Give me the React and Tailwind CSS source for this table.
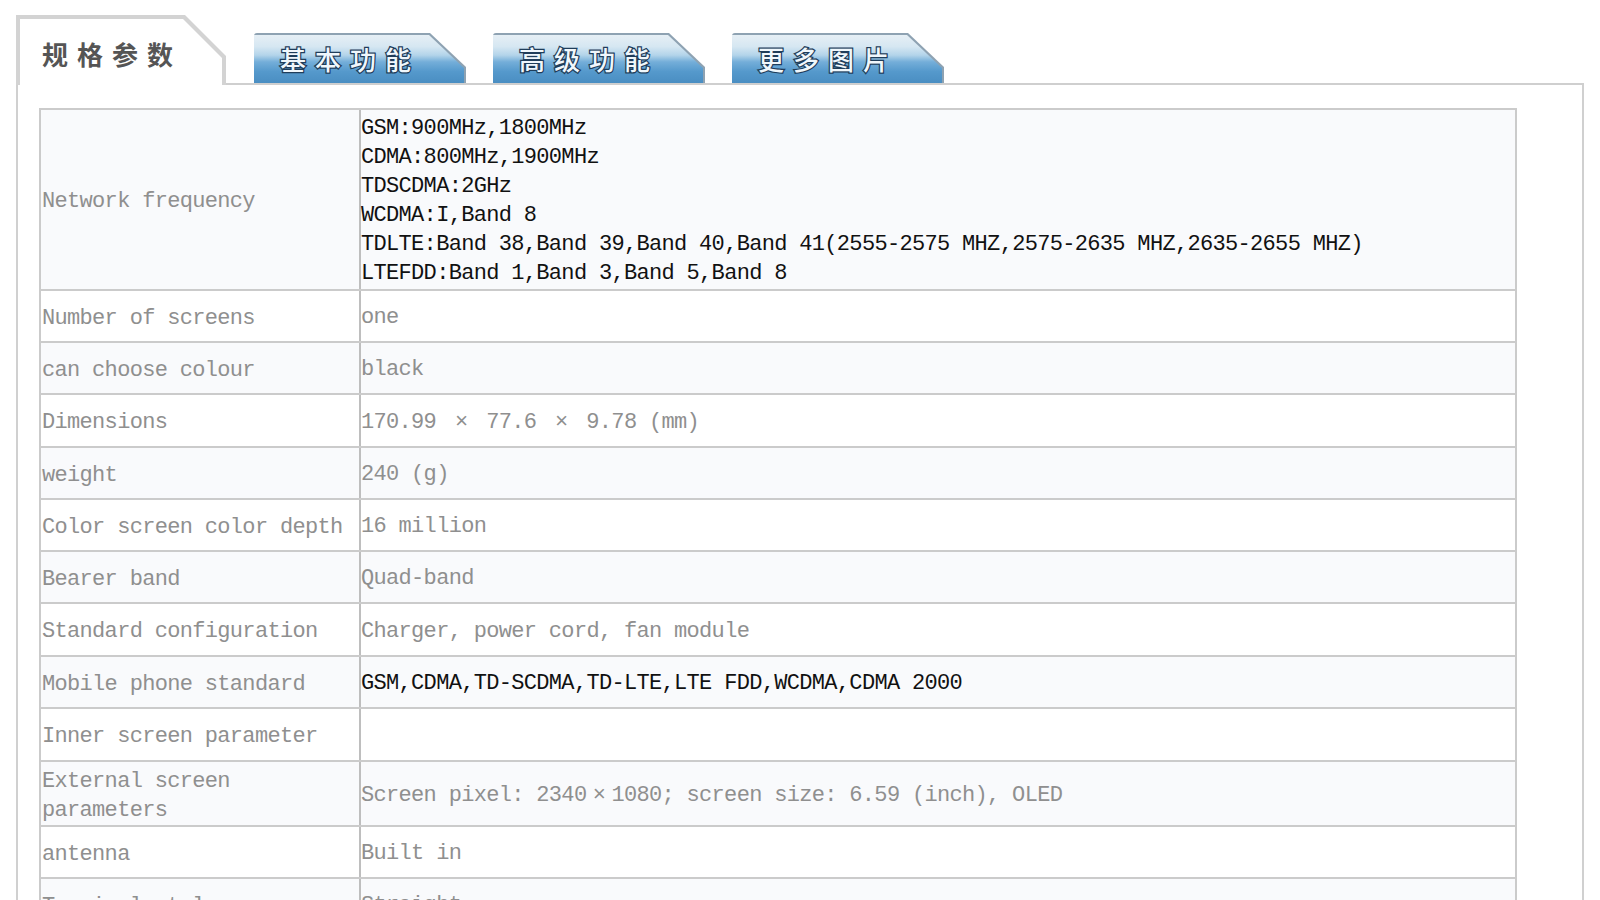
import React from 'react';

const rows = [
  {
    label: 'Network frequency',
    h: 'h-[181px]',
    dark: true,
    value: [
      'GSM:900MHz,1800MHz',
      'CDMA:800MHz,1900MHz',
      'TDSCDMA:2GHz',
      'WCDMA:I,Band 8',
      'TDLTE:Band 38,Band 39,Band 40,Band 41(2555-2575 MHZ,2575-2635 MHZ,2635-2655 MHZ)',
      'LTEFDD:Band 1,Band 3,Band 5,Band 8',
    ],
  },
  { label: 'Number of screens', h: 'h-[52px]', value: ['one'] },
  { label: 'can choose colour', h: 'h-[52px]', value: ['black'] },
  { label: 'Dimensions', h: 'h-[53px]', value: ['dims'] },
  { label: 'weight', h: 'h-[52px]', value: ['240 (g)'] },
  { label: 'Color screen color depth', h: 'h-[52px]', value: ['16 million'] },
  { label: 'Bearer band', h: 'h-[52px]', value: ['Quad-band'] },
  { label: 'Standard configuration', h: 'h-[53px]', value: ['Charger, power cord, fan module'] },
  {
    label: 'Mobile phone standard',
    h: 'h-[52px]',
    dark: true,
    value: ['GSM,CDMA,TD-SCDMA,TD-LTE,LTE FDD,WCDMA,CDMA 2000'],
  },
  { label: 'Inner screen parameter', h: 'h-[53px]', value: [''] },
  { label: 'External screen parameters', h: 'h-[65px]', value: ['screen'] },
  { label: 'antenna', h: 'h-[52px]', value: ['Built in'] },
  { label: 'Terminal style', h: 'h-[52px]', value: ['Straight'] },
];

const Times = () => <span className="inline-block w-[25px] text-center">×</span>;

const renderLine = (line) => {
  if (line === 'dims') {
    return (
      <>
        170.99 <Times /> 77.6 <Times /> 9.78 (mm)
      </>
    );
  }
  if (line === 'screen') {
    return (
      <>
        Screen pixel: 2340<Times />1080; screen size: 6.59 (inch), OLED
      </>
    );
  }
  return line;
};

const BlueTab = ({ label }) => (
  <div className="w-[212px] h-[50px] bg-[#8ea2b2] pt-[2px] rounded-tl-[3px] [clip-path:polygon(0_0,176px_0,100%_34px,100%_100%,0_100%)]">
    <div className="h-full flex items-center pl-[26px] bg-[linear-gradient(180deg,#e6eff5_0%,#d6e7f2_24%,#b3d4ea_42%,#74aed9_56%,#5599cc_76%,#4a8ec2_100%)] [clip-path:polygon(0_0,175px_0,210px_33px,210px_100%,0_100%)]">
      <span className="font-['Noto_Sans_CJK_SC',sans-serif] text-[26px] leading-none font-medium tracking-[9px] text-[#f0f7fc] [-webkit-text-stroke:2.5px_#1f3d5a] [paint-order:stroke_fill]">
        {label}
      </span>
    </div>
  </div>
);

const App = () => {
  return (
    <div className="w-[1600px] h-[900px] overflow-hidden bg-white">
      <div className="ml-[16px] w-[1568px] pt-[15px]">
        <div className="flex h-[70px]">
          <div className="w-[210px] h-[70px] shrink-0 bg-[#d3d3d3] pt-[4px] px-[4px] [clip-path:polygon(0_0,169px_0,100%_41px,100%_100%,0_100%)]">
            <div className="h-full bg-white flex items-center pl-[22px] pt-[4px] [clip-path:polygon(0_0,163px_0,100%_39px,100%_100%,0_100%)]">
              <span className="font-['Noto_Sans_CJK_SC',sans-serif] text-[26px] leading-none font-bold tracking-[9px] text-[#555555]">
                规格参数
              </span>
            </div>
          </div>
          <div className="flex-1 flex items-end gap-[27px] pl-[28px] border-b-2 border-[#cfcfcf]">
            <BlueTab label="基本功能" />
            <BlueTab label="高级功能" />
            <BlueTab label="更多图片" />
          </div>
        </div>

        <div className="h-[815px] border-l-2 border-r-2 border-[#d0d0d0] pl-[21px] pt-[23px]">
          <div className="w-[1478px] border-t-2 border-l-2 border-r-2 border-[#cbcbcb] font-['Liberation_Mono',monospace] text-[22px] tracking-[-0.68px] leading-[29px]">
            {rows.map((row, i) => (
              <div
                key={row.label}
                className={`flex ${row.h} border-b-2 border-[#cbcbcb] ${i % 2 === 0 ? 'bg-[#f9fafc]' : 'bg-white'}`}
              >
                <div className="w-[320px] shrink-0 border-r-2 border-[#bebebe] pl-[1px] pt-[4px] flex items-center text-[#8f8f8f]">
                  <span>{row.label}</span>
                </div>
                <div className={`flex-1 pt-[3px] flex flex-col justify-center ${row.dark ? 'text-[#111111]' : 'text-[#8f8f8f]'}`}>
                  {row.value.map((line, j) => (
                    <div key={j} className="whitespace-pre">
                      {renderLine(line)}
                    </div>
                  ))}
                </div>
              </div>
            ))}
          </div>
        </div>
      </div>
    </div>
  );
};

export default App;
